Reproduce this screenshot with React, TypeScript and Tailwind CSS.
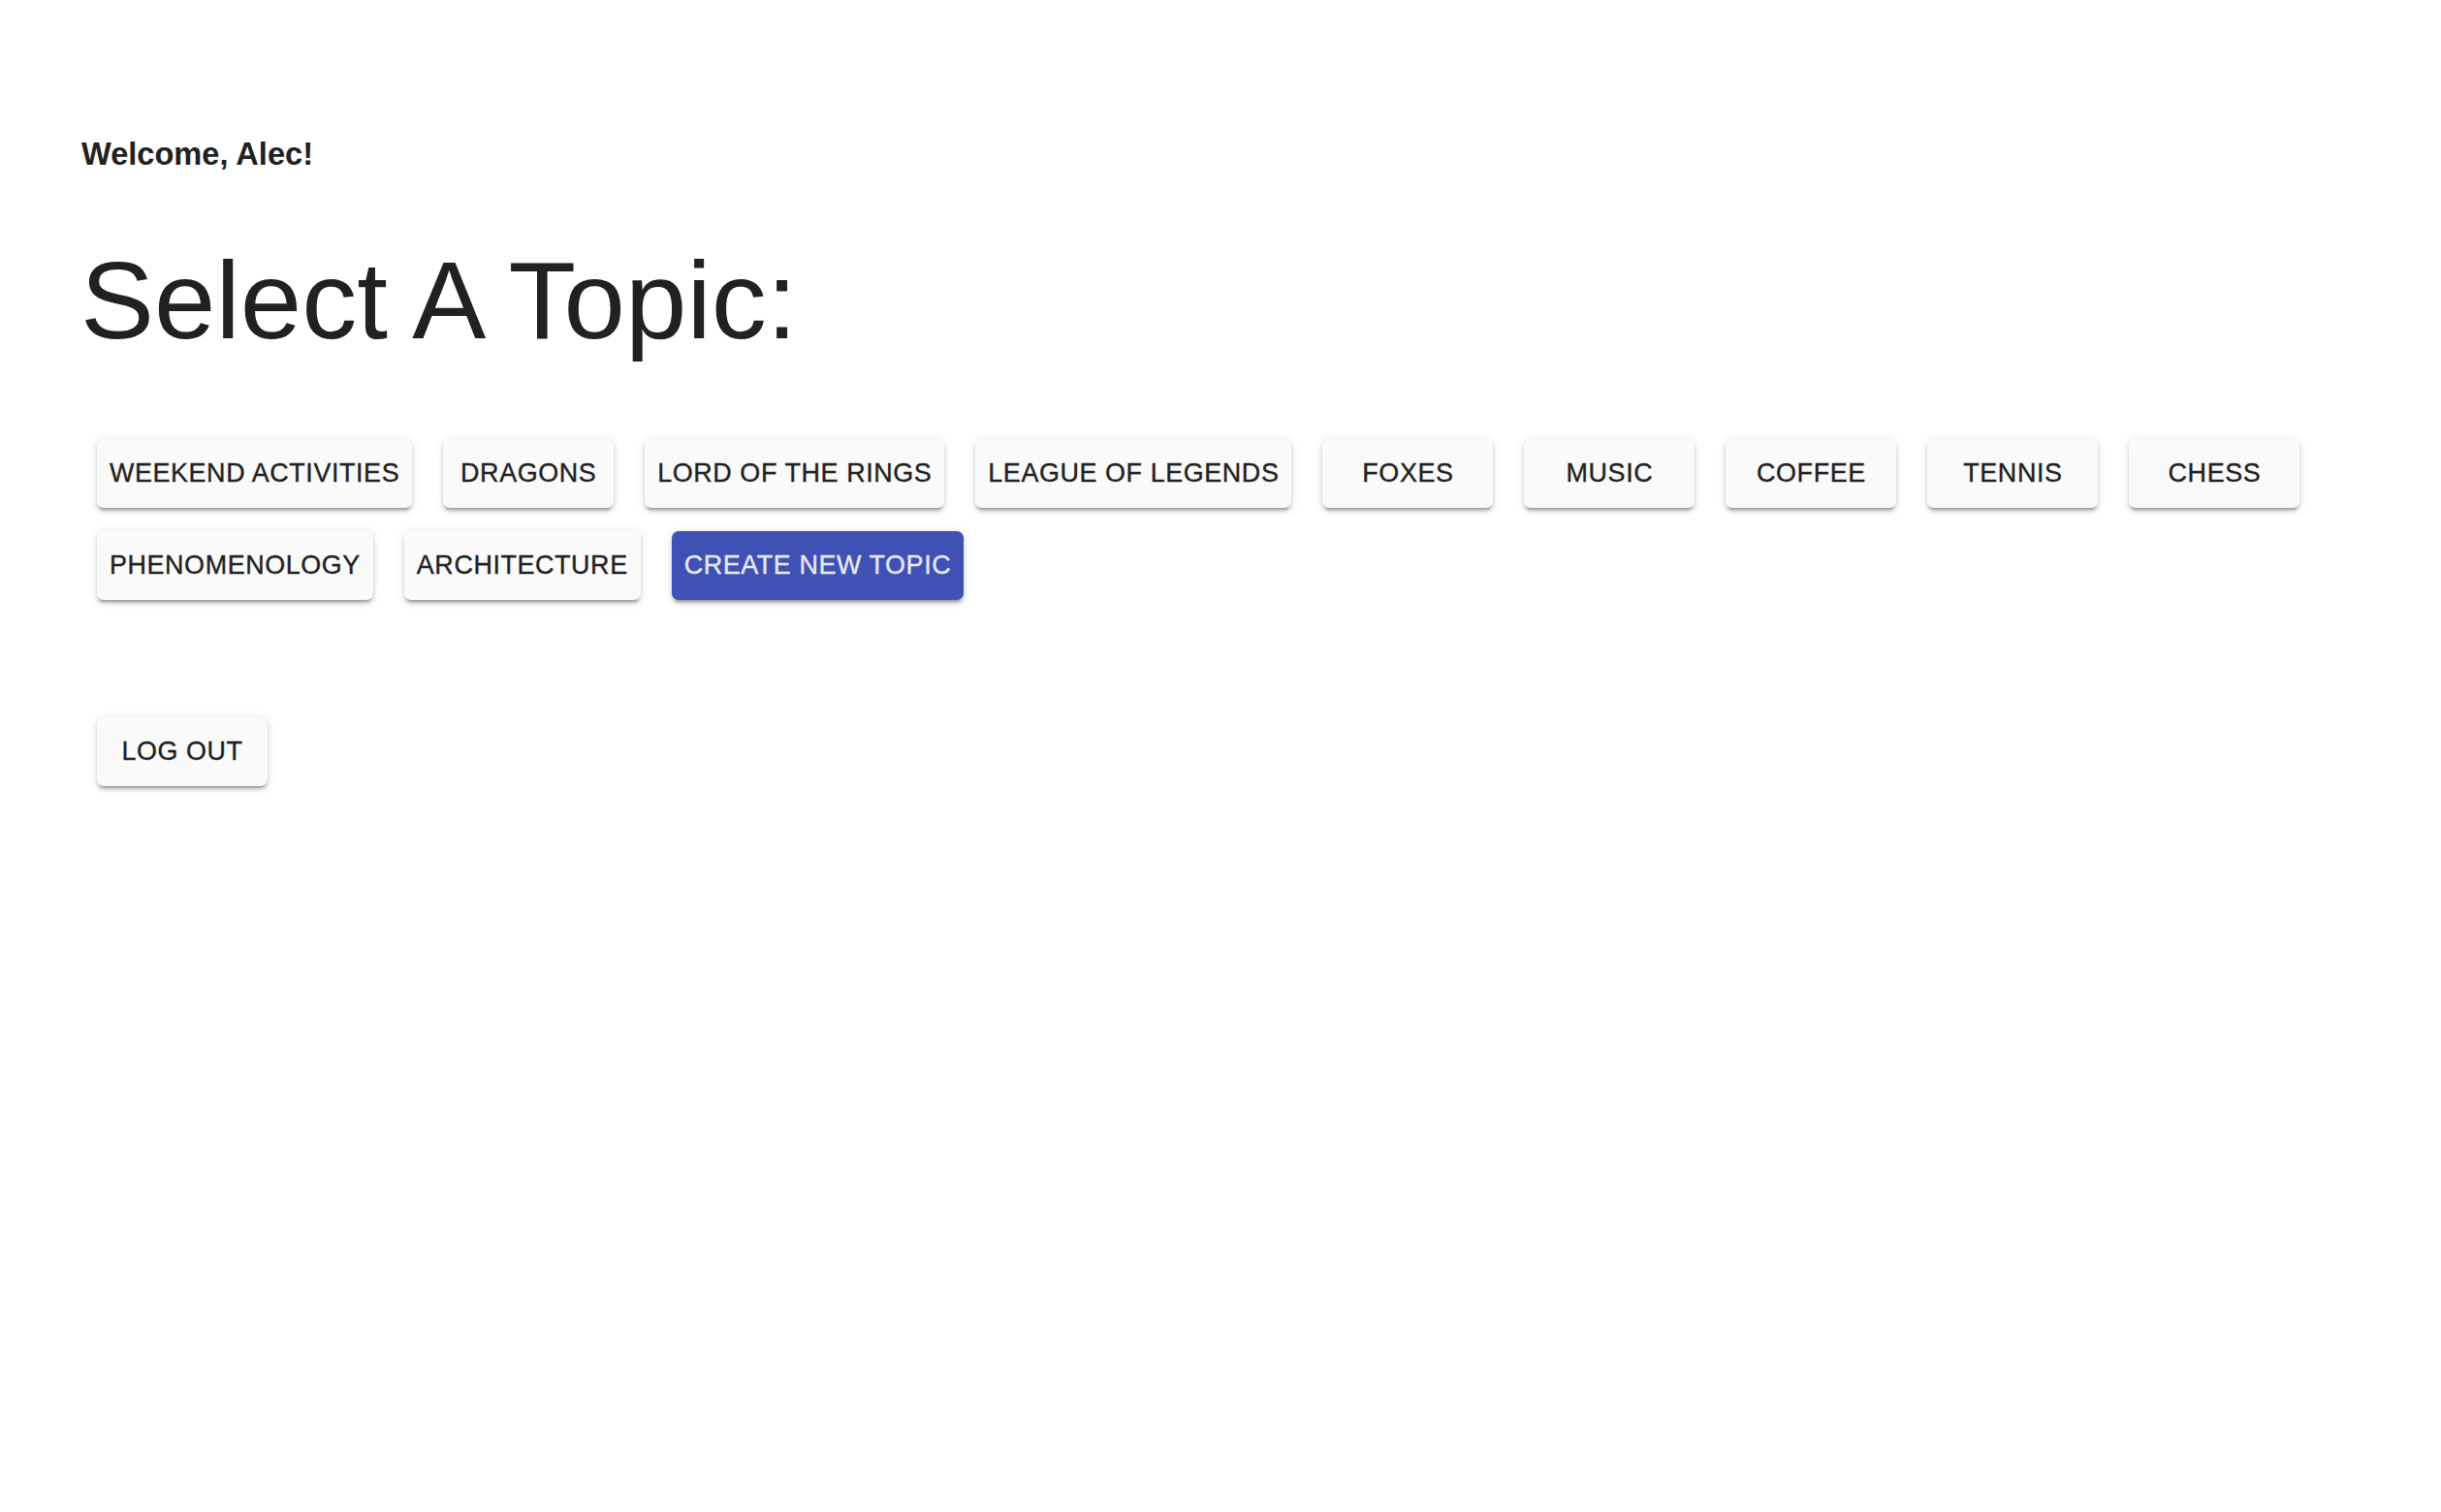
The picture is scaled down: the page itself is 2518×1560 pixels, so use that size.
const topics = [
  "Weekend Activities",
  "Dragons",
  "Lord of the Rings",
  "League of Legends",
  "Foxes",
  "Music",
  "Coffee",
  "Tennis",
  "Chess",
  "Phenomenology",
  "Architecture",
];

const btnBase =
  "inline-flex h-[71px] min-w-[176px] items-center justify-center rounded-[7px] px-[13px] text-[26.9px] font-medium uppercase tracking-[0.6px] [-webkit-text-stroke:0.35px_currentColor] shadow-[0_5.7px_1.9px_-3.8px_rgba(0,0,0,0.2),0_3.8px_3.8px_0_rgba(0,0,0,0.14),0_1.9px_9.5px_0_rgba(0,0,0,0.12)]";

function TopicButton({ label }: { label: string }) {
  return (
    <button type="button" className={`${btnBase} bg-[#fafafa] text-[#212121]`}>
      {label}
    </button>
  );
}

export default function App() {
  return (
    <div className="min-h-screen bg-white pl-[84px] pt-[139px] font-['Liberation_Sans',Arial,sans-serif] text-[#212121]">
      <h6 className="text-[32.6px] font-bold leading-[40px]">Welcome, Alec!</h6>
      <h2 className="mt-[67px] -ml-px text-[114px] font-normal leading-[128px]">
        Select A Topic:
      </h2>

      <div className="mt-[79px] flex flex-wrap gap-x-[32px] gap-y-[24px] pl-[16px] pr-[64px]">
        {topics.map((t) => (
          <TopicButton key={t} label={t} />
        ))}
        <button type="button" className={`${btnBase} bg-[#3f51b5] text-[#e8eaf6]`}>
          Create New Topic
        </button>
      </div>

      <div className="mt-[121px] pl-[16px]">
        <TopicButton label="Log Out" />
      </div>
    </div>
  );
}
